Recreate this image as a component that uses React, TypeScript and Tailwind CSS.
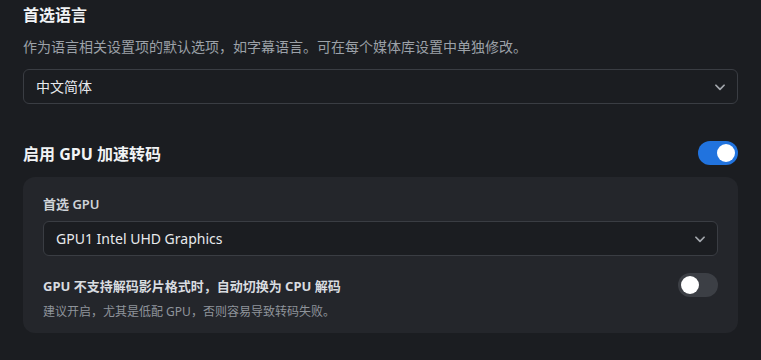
import React from "react";

const FONT = '"Noto Sans", "Noto Sans CJK SC", sans-serif';

function Chevron() {
  return (
    <svg width="14" height="14" viewBox="0 0 24 24" fill="none" stroke="#a3a7ad" strokeWidth="3" strokeLinecap="round" strokeLinejoin="round">
      <path d="M5 9l7 7 7-7" />
    </svg>
  );
}

function Select({ value }: { value: string }) {
  return (
    <div className="flex h-[35px] items-center justify-between rounded-[6px] border border-[#3a3d43] bg-[#1b1d21] pl-[12px] pr-[10px]">
      <span className="text-[14px] leading-[20px] text-[#e8eaed]">{value}</span>
      <Chevron />
    </div>
  );
}

function Toggle({ on }: { on: boolean }) {
  return on ? (
    <div className="flex h-[24px] w-[40px] items-center justify-end rounded-full bg-[#2173de] pr-[3px]">
      <div className="h-[18px] w-[18px] rounded-full bg-white" />
    </div>
  ) : (
    <div className="flex h-[24px] w-[40px] items-center justify-start rounded-full bg-[#3c3f45] pl-[3px]">
      <div className="h-[18px] w-[18px] rounded-full bg-white" />
    </div>
  );
}

export default function App() {
  return (
    <div className="h-[360px] w-[761px] overflow-hidden bg-[#1b1d21] px-[23px] pt-[3px]" style={{ fontFamily: FONT }}>
      <div className="text-[16px] font-bold leading-[24px] text-[#f1f3f5]">首选语言</div>
      <div className="mt-[10px] text-[14px] leading-[20px] text-[#9ca1a8]">
        作为语言相关设置项的默认选项，如字幕语言。可在每个媒体库设置中单独修改。
      </div>
      <div className="mt-[12px]">
        <Select value="中文简体" />
      </div>

      <div className="mt-[38px] flex h-[24px] items-center justify-between">
        <div className="text-[16px] font-bold leading-[24px] text-[#f1f3f5]">启用 GPU 加速转码</div>
        <div className="-mt-[3px]">
          <Toggle on />
        </div>
      </div>

      <div className="mt-[11px] rounded-[12px] bg-[#24262b] px-[20px] pb-[12px] pt-[17px]">
        <div className="text-[13px] font-semibold leading-[20px] text-[#cfd3d8]">首选 GPU</div>
        <div className="mt-[7px]">
          <Select value="GPU1 Intel UHD Graphics" />
        </div>
        <div className="mt-[20px] flex items-center justify-between">
          <div>
            <div className="text-[13px] font-bold leading-[20px] text-[#d9dce0]">
              GPU 不支持解码影片格式时，自动切换为 CPU 解码
            </div>
            <div className="mt-[7px] text-[12px] leading-[18px] text-[#8f949b]">
              建议开启，尤其是低配 GPU，否则容易导致转码失败。
            </div>
          </div>
          <div className="-mt-[27px]">
            <Toggle on={false} />
          </div>
        </div>
      </div>
    </div>
  );
}
